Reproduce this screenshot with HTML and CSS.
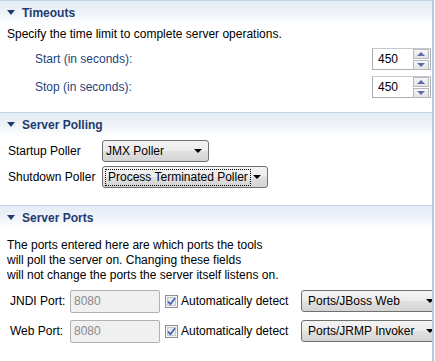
FILE: index.html
```html
<!DOCTYPE html>
<html>
<head>
<meta charset="utf-8">
<link rel="stylesheet" href="styles.css">
</head>
<body>
<div class="page">
  <section class="sec sec-timeouts">
    <div class="hdr"><span class="tri"></span><span class="title">Timeouts</span></div>
    <p class="desc">Specify the time limit to complete server operations.</p>
    <div class="trow">
      <span class="tlabel">Start (in seconds):</span>
      <div class="spin"><span class="val">450</span><span class="btns"><span class="sb up"></span><span class="sb down"></span></span></div>
    </div>
    <div class="trow">
      <span class="tlabel">Stop (in seconds):</span>
      <div class="spin"><span class="val">450</span><span class="btns"><span class="sb up"></span><span class="sb down"></span></span></div>
    </div>
  </section>

  <section class="sec sec-polling">
    <div class="hdr"><span class="tri"></span><span class="title">Server Polling</span></div>
    <div class="prow">
      <span class="plabel">Startup Poller</span>
      <div class="combo c1"><span class="ctext">JMX Poller</span><span class="carrow"></span></div>
    </div>
    <div class="prow">
      <span class="plabel">Shutdown Poller</span>
      <div class="combo c2"><span class="ctext focus">Process Terminated Poller</span><span class="carrow"></span></div>
    </div>
  </section>

  <section class="sec sec-ports">
    <div class="hdr"><span class="tri"></span><span class="title">Server Ports</span></div>
    <p class="para">The ports entered here are which ports the tools<br>will poll the server on. Changing these fields<br>will not change the ports the server itself listens on.</p>
    <div class="portrow">
      <span class="portlabel">JNDI Port:</span>
      <div class="field">8080</div>
      <span class="check"><svg width="13" height="13" viewBox="0 0 13 13"><rect x="0.5" y="0.5" width="12" height="12" fill="#f4f4f4" stroke="#8f8f8f"/><rect x="2.5" y="2.5" width="8" height="8" fill="#e6e9ee" stroke="#c4c9d0"/><path d="M3 6.5 L5.3 9.2 L10 3.2" fill="none" stroke="#3d5aa8" stroke-width="1.6"/></svg></span>
      <span class="auto">Automatically detect</span>
      <div class="combo c3"><span class="ctext">Ports/JBoss Web</span><span class="carrow"></span></div>
    </div>
    <div class="portrow">
      <span class="portlabel">Web Port:</span>
      <div class="field">8080</div>
      <span class="check"><svg width="13" height="13" viewBox="0 0 13 13"><rect x="0.5" y="0.5" width="12" height="12" fill="#f4f4f4" stroke="#8f8f8f"/><rect x="2.5" y="2.5" width="8" height="8" fill="#e6e9ee" stroke="#c4c9d0"/><path d="M3 6.5 L5.3 9.2 L10 3.2" fill="none" stroke="#3d5aa8" stroke-width="1.6"/></svg></span>
      <span class="auto">Automatically detect</span>
      <div class="combo c3"><span class="ctext">Ports/JRMP Invoker</span><span class="carrow"></span></div>
    </div>
  </section>
</div>
</body>
</html>
```

FILE: styles.css
```css
html, body {
  margin: 0;
  padding: 0;
  background: #ffffff;
}
body {
  font-family: "Liberation Sans", Arial, sans-serif;
  font-size: 12px;
  color: #000;
  width: 435px;
  height: 361px;
  overflow: hidden;
}
.page {
  width: 432px;
  height: 361px;
  border-right: 2px solid #b9cbe2;
  overflow: hidden;
}
.sec {
  border-top: 1px solid #c3d2e4;
}
.hdr {
  height: 23px;
  display: flex;
  align-items: center;
  background: linear-gradient(to bottom, #e4ecf6 0%, #f1f5fa 60%, #ffffff 100%);
  color: #1f3b6e;
  font-weight: bold;
  font-size: 12px;
}
.tri {
  width: 0;
  height: 0;
  border-left: 4px solid transparent;
  border-right: 4px solid transparent;
  border-top: 5px solid #1f3b6e;
  margin: 0 7px 0 7px;
}
.desc {
  margin: 3px 0 0 7px;
  line-height: 15px;
}
.trow {
  display: flex;
  align-items: center;
  justify-content: space-between;
  margin-top: 6px;
  padding-left: 35px;
  height: 22px;
}
.sec-timeouts .trow:first-of-type { margin-top: 8px; }
.tlabel {
  color: #243f7a;
}
.spin {
  width: 57px;
  height: 20px;
  border: 1px solid #abadb3;
  border-top-color: #c5c8cf;
  display: flex;
  align-items: center;
  justify-content: space-between;
  background: #fff;
  margin-right: 1px;
}
.spin .val {
  padding-left: 5px;
}
.btns {
  display: flex;
  flex-direction: column;
  gap: 1px;
  margin-right: 1px;
}
.sb {
  width: 14px;
  height: 8px;
  border: 1px solid #b5b8bd;
  background: linear-gradient(#f7f7f7, #e3e3e3);
  position: relative;
}
.sb::after {
  content: "";
  position: absolute;
  left: 3px;
  width: 0;
  height: 0;
  border-left: 4px solid transparent;
  border-right: 4px solid transparent;
}
.sb.up::after { top: 2px; border-bottom: 4px solid #5a6fa8; }
.sb.down::after { top: 2px; border-top: 4px solid #5a6fa8; }

.sec-polling {
  margin-top: 14px;
}
.prow {
  display: flex;
  align-items: center;
  padding-left: 8px;
  height: 22px;
  margin-top: 4px;
}
.sec-polling .prow:first-of-type { margin-top: 7px; }
.plabel {
  width: 94px;
  flex-shrink: 0;
}
.combo {
  height: 20px;
  border: 1px solid #707070;
  border-radius: 3px;
  background: linear-gradient(to bottom, #f3f3f3 0%, #ececec 50%, #e0e0e0 51%, #d4d4d4 100%);
  display: flex;
  align-items: center;
  justify-content: space-between;
  box-sizing: border-box;
  flex-shrink: 0;
}
.c1 { width: 107px; height: 22px; }
.c2 { width: 166px; height: 22px; }
.ctext {
  padding-left: 3px;
  line-height: 16px;
}
.ctext.focus {
  margin-left: 2px;
  padding: 0 2px 0 2px;
  border: 1px dotted #000;
  line-height: 15px;
}
.carrow {
  width: 0;
  height: 0;
  border-left: 4px solid transparent;
  border-right: 4px solid transparent;
  border-top: 4px solid #000;
  margin-right: 6px;
}
.sec-ports {
  margin-top: 17px;
}
.para {
  margin: 9px 0 0 7px;
  line-height: 15px;
}
.portrow {
  display: flex;
  align-items: center;
  height: 24px;
  padding-left: 10px;
  margin-top: 6px;
}
.sec-ports .portrow:first-of-type { margin-top: 9px; }
.portlabel {
  width: 60px;
  flex-shrink: 0;
}
.field {
  width: 90px;
  height: 23px;
  flex-shrink: 0;
  box-sizing: border-box;
  border: 1px solid #b0b0b0;
  border-radius: 2px;
  background: #f0f0f0;
  color: #8a8a8a;
  padding-left: 3px;
  line-height: 21px;
}
.check {
  display: flex;
  flex-shrink: 0;
  margin-left: 5px;
}
.auto {
  margin-left: 3px;
  width: 120px;
  flex-shrink: 0;
}
.c3 {
  width: 140px;
  height: 22px;
  border-radius: 3px 0 0 3px;
}
.c3 .ctext { padding-left: 6px; }
```
